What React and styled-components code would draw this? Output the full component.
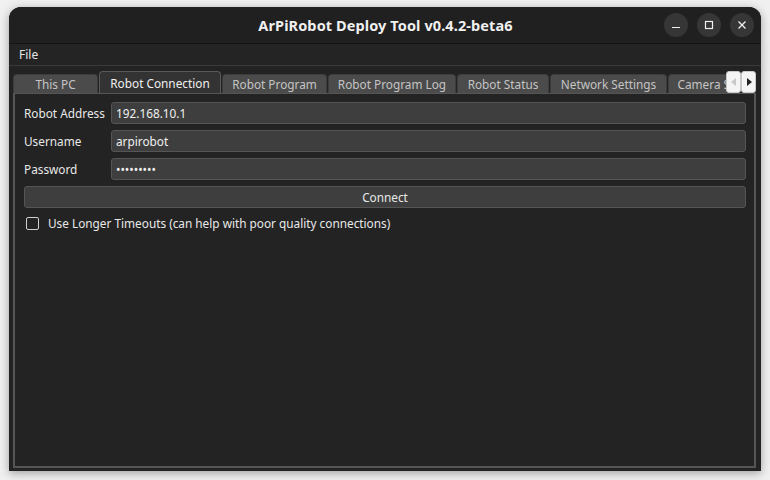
import React, { useState } from 'react';
import styled, { createGlobalStyle } from 'styled-components';

const Global = createGlobalStyle`
  html, body {
    margin: 0;
    padding: 0;
    background: #f2f2f2;
    width: 770px;
    height: 480px;
    overflow: hidden;
  }
  * { box-sizing: border-box; }
`;

const Desktop = styled.div`
  width: 770px;
  height: 480px;
  padding: 7px 9px 9px 9px;
  background: #f0f0f0;
`;

const Window = styled.div`
  width: 752px;
  height: 464px;
  background: #232323;
  border-radius: 12px 12px 0 0;
  box-shadow: 0 2px 10px rgba(0, 0, 0, 0.35);
  display: flex;
  flex-direction: column;
  font-family: "Noto Sans", "DejaVu Sans", sans-serif;
  color: #e6e6e6;
  overflow: hidden;
`;

const TitleBar = styled.div`
  height: 37px;
  background: #202020;
  border-bottom: 1px solid #141414;
  display: grid;
  grid-template-columns: 1fr auto 1fr;
  align-items: center;
  padding: 0 7px;
`;

const Title = styled.div`
  grid-column: 2;
  font-weight: 700;
  font-size: 14.5px;
  color: #f0f0f0;
  letter-spacing: 0.1px;
  padding-left: 1px;
`;

const Controls = styled.div`
  grid-column: 3;
  justify-self: end;
  display: flex;
  gap: 9px;
`;

const CtrlBtn = styled.div`
  width: 24px;
  height: 24px;
  border-radius: 50%;
  background: #363636;
  display: flex;
  align-items: center;
  justify-content: center;
`;

const MenuBar = styled.div`
  height: 22px;
  background: #242424;
  border-bottom: 1px solid #3a3a3a;
  display: flex;
  align-items: center;
  padding-left: 10px;
  font-size: 12px;
`;

const Body = styled.div`
  flex: 1;
  display: flex;
  flex-direction: column;
  padding: 4px 5px 3px 4px;
`;

const TabRow = styled.div`
  display: flex;
  align-items: flex-end;
  height: 23px;
  position: relative;
`;

const Tab = styled.div`
  height: ${p => (p.active ? '22px' : '19px')};
  background: ${p => (p.active ? '#333333' : '#4b4b4b')};
  border: 1px solid ${p => (p.active ? '#595959' : '#3c3c3c')};
  border-bottom: none;
  border-radius: 4px 4px 0 0;
  margin-right: 1px;
  font-size: 11.8px;
  color: ${p => (p.active ? '#f0f0f0' : '#c4c4c4')};
  display: flex;
  align-items: center;
  justify-content: center;
  white-space: nowrap;
  flex-shrink: 0;
  width: ${p => p.w}px;
`;

const TabClip = styled.div`
  display: flex;
  align-items: flex-end;
  overflow: hidden;
  width: 714px;
  height: 100%;
`;

const Scrollers = styled.div`
  position: absolute;
  right: 0;
  bottom: 0;
  display: flex;
`;

const ScrollBtn = styled.div`
  width: 15px;
  height: 22px;
  background: #f4f4f4;
  border: 1px solid #c8c8c8;
  border-radius: 3px;
  display: flex;
  align-items: center;
  justify-content: center;
`;

const Panel = styled.div`
  flex: 1;
  border: 2px solid #555555;
  border-top: 1px solid #555555;
  background: #232323;
  padding: 8px 8px 0 9px;
  display: flex;
  flex-direction: column;
  gap: 6px;
`;

const FieldRow = styled.div`
  display: grid;
  grid-template-columns: 87px 1fr;
  align-items: center;
`;

const Label = styled.label`
  font-size: 11.8px;
  color: #e8e8e8;
`;

const Input = styled.input`
  height: 22px;
  background: #3e3e3e;
  border: 1px solid #555555;
  border-radius: 3px;
  color: #f0f0f0;
  font-family: inherit;
  font-size: 11.8px;
  padding: 0 4px;
  outline: none;
  width: 100%;
`;

const Button = styled.button`
  height: 22px;
  background: #3e3e3e;
  border: 1px solid #555555;
  border-radius: 3px;
  color: #e8e8e8;
  font-family: inherit;
  font-size: 11.8px;
  width: 100%;
  padding: 0;
`;

const CheckRow = styled.label`
  display: flex;
  align-items: center;
  gap: 9px;
  padding-left: 2px;
  margin-top: 1px;
  font-size: 11.8px;
  color: #e8e8e8;
`;

const Box = styled.span`
  width: 13px;
  height: 13px;
  border: 1.5px solid #cfcfcf;
  border-radius: 2px;
  display: inline-block;
`;

const tabs = [
  { name: 'This PC', w: 85 },
  { name: 'Robot Connection', w: 122, active: true },
  { name: 'Robot Program', w: 105 },
  { name: 'Robot Program Log', w: 128 },
  { name: 'Robot Status', w: 92 },
  { name: 'Network Settings', w: 117 },
  { name: 'Camera Settings', w: 110 },
];

export default function App() {
  const [addr, setAddr] = useState('192.168.10.1');
  const [user, setUser] = useState('arpirobot');
  const [pass, setPass] = useState('arpirobot');

  return (
    <Desktop>
      <Global />
      <Window>
        <TitleBar>
          <Title>ArPiRobot Deploy Tool v0.4.2-beta6</Title>
          <Controls>
            <CtrlBtn>
              <svg width="10" height="10" viewBox="0 0 10 10">
                <path d="M1 7.5h8" stroke="#f0f0f0" strokeWidth="1.2" />
              </svg>
            </CtrlBtn>
            <CtrlBtn>
              <svg width="10" height="10" viewBox="0 0 10 10">
                <rect x="1.5" y="1.5" width="7" height="7" fill="none" stroke="#f0f0f0" strokeWidth="1.2" />
              </svg>
            </CtrlBtn>
            <CtrlBtn>
              <svg width="10" height="10" viewBox="0 0 10 10">
                <path d="M1.5 1.5l7 7M8.5 1.5l-7 7" stroke="#f0f0f0" strokeWidth="1.3" />
              </svg>
            </CtrlBtn>
          </Controls>
        </TitleBar>
        <MenuBar>File</MenuBar>
        <Body>
          <TabRow>
            <TabClip>
              {tabs.map(t => (
                <Tab key={t.name} active={t.active} w={t.w}>{t.name}</Tab>
              ))}
            </TabClip>
            <Scrollers>
              <ScrollBtn>
                <svg width="6" height="8" viewBox="0 0 6 8"><path d="M5 0v8L0 4z" fill="#c8c8c8" /></svg>
              </ScrollBtn>
              <ScrollBtn>
                <svg width="6" height="8" viewBox="0 0 6 8"><path d="M1 0v8l5-4z" fill="#222" /></svg>
              </ScrollBtn>
            </Scrollers>
          </TabRow>
          <Panel>
            <FieldRow>
              <Label>Robot Address</Label>
              <Input value={addr} onChange={e => setAddr(e.target.value)} />
            </FieldRow>
            <FieldRow>
              <Label>Username</Label>
              <Input value={user} onChange={e => setUser(e.target.value)} />
            </FieldRow>
            <FieldRow>
              <Label>Password</Label>
              <Input type="password" value={pass} onChange={e => setPass(e.target.value)} />
            </FieldRow>
            <Button>Connect</Button>
            <CheckRow>
              <Box />
              Use Longer Timeouts (can help with poor quality connections)
            </CheckRow>
          </Panel>
        </Body>
      </Window>
    </Desktop>
  );
}
